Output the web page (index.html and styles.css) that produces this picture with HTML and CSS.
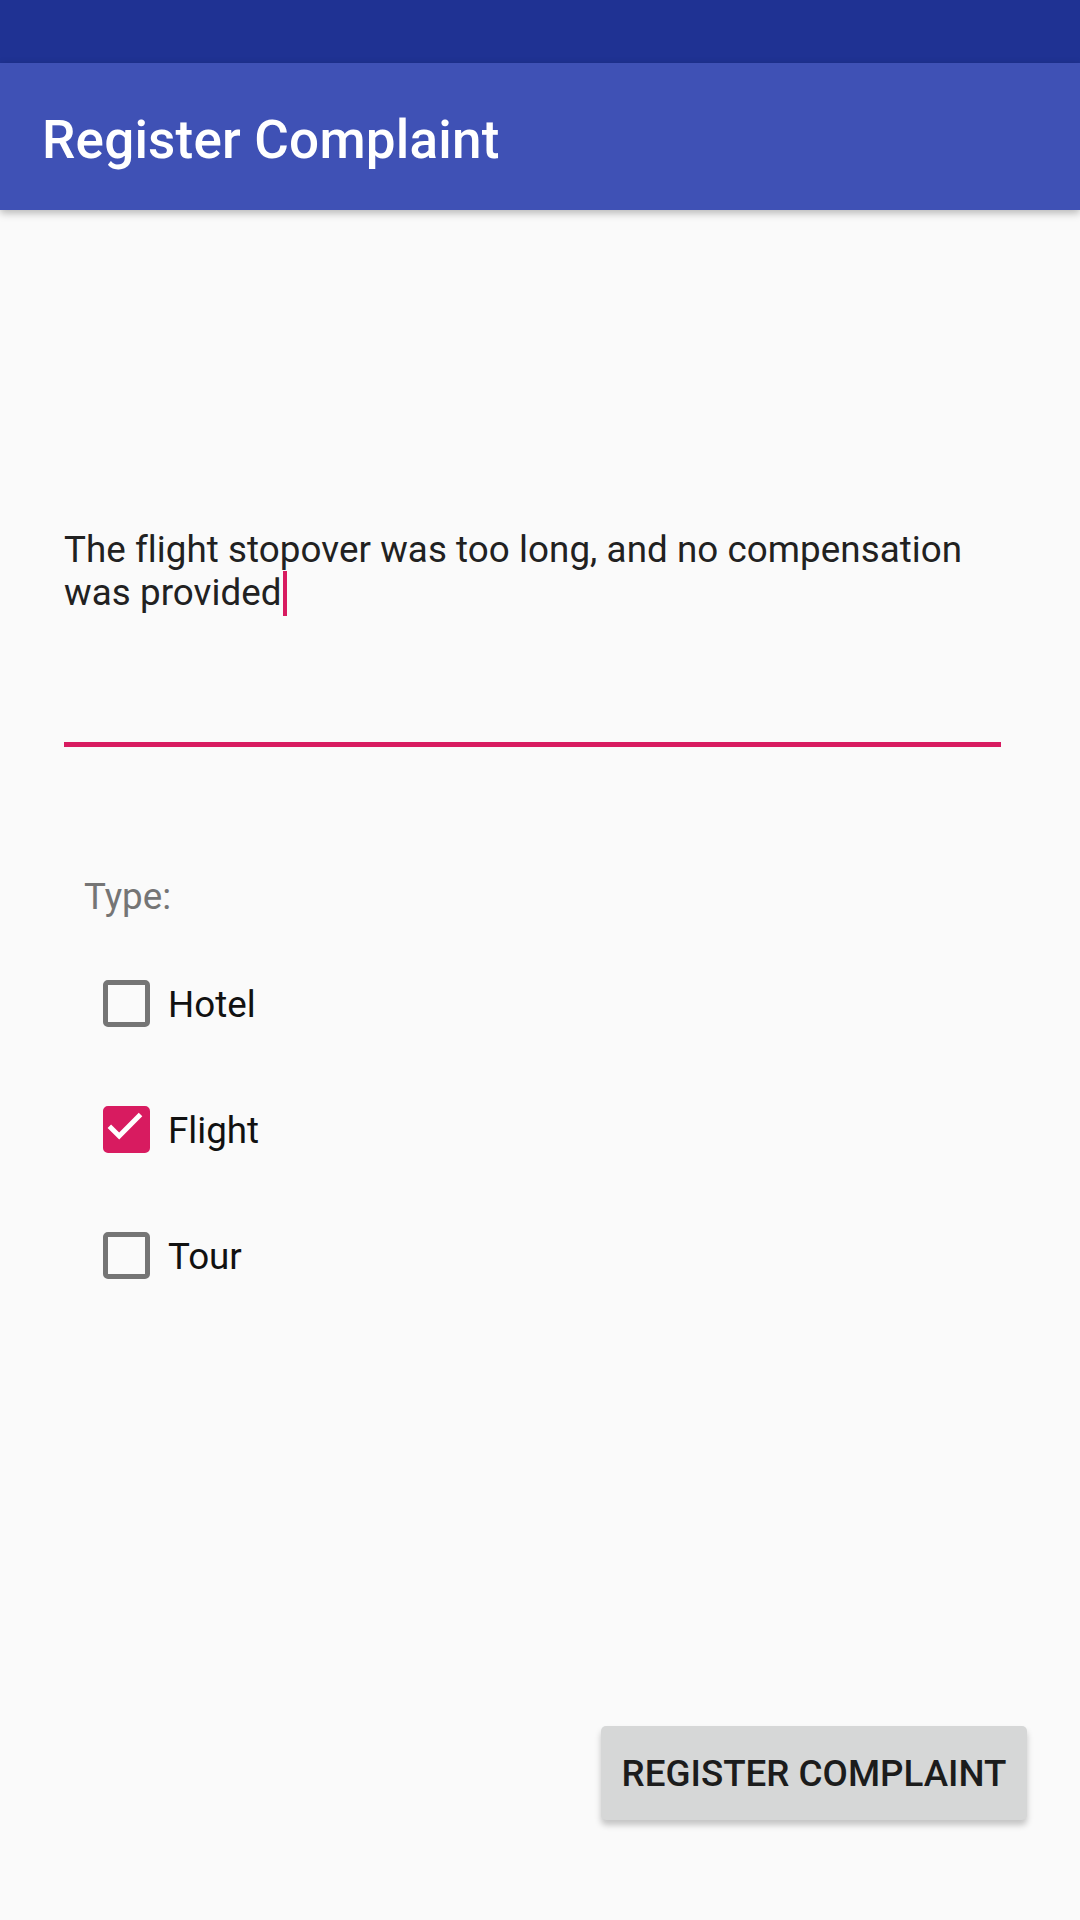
FILE: index.html
```html
<!DOCTYPE html>
<html lang="en">
<head>
<meta charset="utf-8">
<title>Register Complaint</title>
<link rel="stylesheet" href="styles.css">
</head>
<body>
<div class="screen">
  <div class="status-bar"></div>
  <header class="app-bar">
    <h1 class="app-title">Register Complaint</h1>
  </header>
  <main class="content">
    <div class="edit">
      <p class="edit-text">The flight stopover was too long, and no compensation was provided<span class="cursor"></span></p>
    </div>
    <div class="type-label">Type:</div>
    <div class="options">
      <label class="option">
        <span class="box"></span>
        <span class="option-text">Hotel</span>
      </label>
      <label class="option">
        <span class="box checked">
          <svg class="check" viewBox="0 0 18 18" width="47" height="47"><polyline points="3.1,8.8 6.2,11.9 13.7,4.3" fill="none" stroke="#ffffff" stroke-width="1.9" stroke-linecap="square"/></svg>
        </span>
        <span class="option-text">Flight</span>
      </label>
      <label class="option">
        <span class="box"></span>
        <span class="option-text">Tour</span>
      </label>
    </div>
    <button class="register-btn" type="button">REGISTER COMPLAINT</button>
  </main>
</div>
</body>
</html>
```
FILE: styles.css
```css
html, body {
  margin: 0;
  padding: 0;
}
body {
  background: #fafafa;
  font-family: Roboto, "Liberation Sans", sans-serif;
}
.screen {
  width: 1080px;
  height: 1920px;
  display: flex;
  flex-direction: column;
  overflow: hidden;
}
.status-bar {
  height: 63px;
  background: #1f3293;
  flex: none;
}
.app-bar {
  height: 147px;
  box-sizing: border-box;
  background: #3f51b5;
  display: flex;
  align-items: center;
  padding: 7px 0 0 42px;
  box-shadow: 0 3px 8px rgba(0, 0, 0, 0.28);
  position: relative;
  z-index: 1;
  flex: none;
}
.app-title {
  margin: 0;
  color: #ffffff;
  font-size: 53px;
  font-weight: 500;
  line-height: 1.172;
  letter-spacing: 0.2px;
}
.content {
  flex: 1;
  display: flex;
  flex-direction: column;
  padding: 0 79px 100px 64px;
}
.edit {
  margin-top: 318px;
  padding-bottom: 126px;
  border-bottom: 5px solid #d81b60;
}
.edit-text {
  margin: 0;
  font-size: 36.75px;
  line-height: 43px;
  letter-spacing: 0.06px;
  color: #212121;
}
.cursor {
  display: inline-block;
  width: 4.5px;
  height: 45px;
  margin-left: 1px;
  background: #d81b60;
  vertical-align: -11px;
}
.type-label {
  margin: 128px 0 0 20px;
  font-size: 36.75px;
  line-height: 43px;
  color: #757575;
}
.options {
  margin-top: 23px;
  display: flex;
  flex-direction: column;
}
.option {
  height: 126px;
  display: flex;
  align-items: center;
}
.box {
  width: 47px;
  height: 47px;
  box-sizing: border-box;
  border: 5.3px solid #757575;
  border-radius: 5px;
  margin-left: 39px;
  margin-top: -2px;
  flex: none;
  position: relative;
}
.box.checked {
  background: #d81b60;
  border-color: #d81b60;
}
.check {
  position: absolute;
  left: -5.3px;
  top: -5.3px;
}
.option-text {
  margin-left: 18px;
  font-size: 36.75px;
  line-height: 43px;
  color: #111111;
}
.register-btn {
  margin-top: auto;
  align-self: flex-end;
  margin-right: -26px;
  width: 426px;
  height: 94px;
  border: none;
  border-radius: 5px;
  background: #d6d7d7;
  box-shadow: 0 5px 6px rgba(0, 0, 0, 0.22);
  font-family: Roboto, "Liberation Sans", sans-serif;
  font-size: 36.75px;
  font-weight: 500;
  color: #1c1c1c;
  padding: 0;
  letter-spacing: 0;
}
```
